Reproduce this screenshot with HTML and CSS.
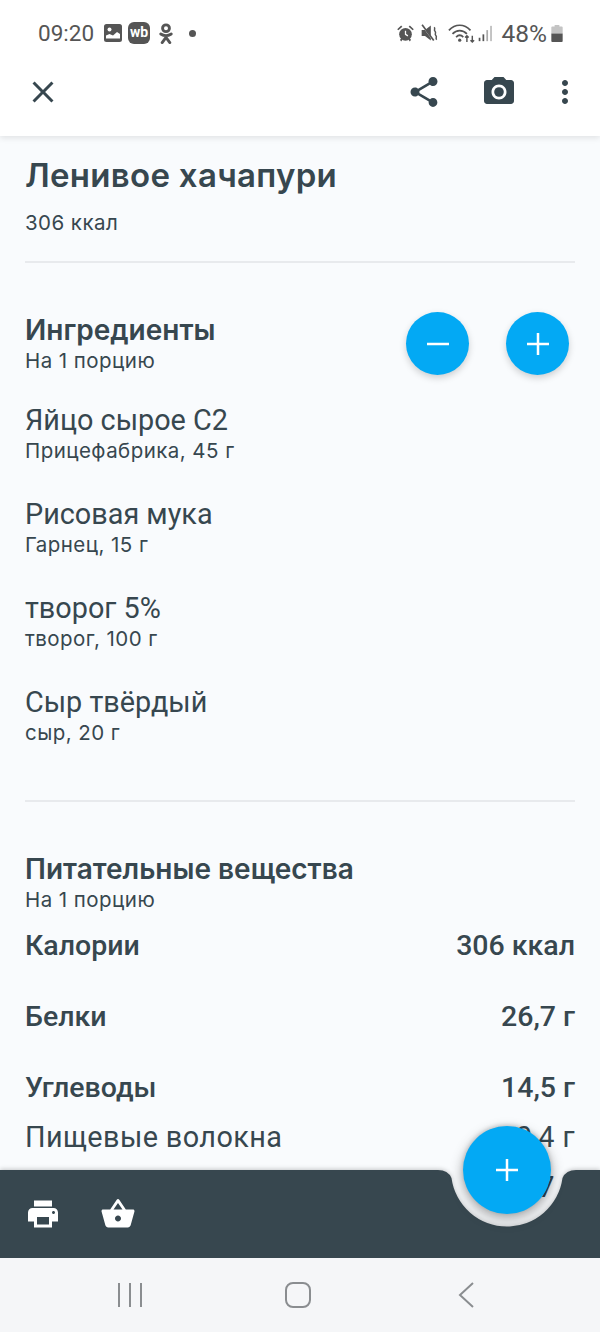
FILE: index.html
```html
<!DOCTYPE html>
<html lang="ru">
<head>
    <meta charset="UTF-8">
    <meta name="viewport" content="width=device-width, initial-scale=1.0">
    <title>Ленивое хачапури</title>
    <link rel="stylesheet" href="styles.css">
</head>
<body>
    <header class="top">
        <div class="status">
            <span class="time">09:20</span>
            <svg class="st-pic" viewBox="0 0 18 18"><path fill="#555" d="M2.5 0h13A2.5 2.5 0 0 1 18 2.5v13a2.500 2.500 0 0 1-2.500 2.500h-13A2.500 2.500 0 0 1 0 15.500v-13A2.500 2.500 0 0 1 2.500 0z"/><circle cx="5.500" cy="5.500" r="2" fill="#fff"/><path fill="#fff" d="M2 14.500v-3l3.500-1.500 3.500 1.500 4-3.500 3 2v4.500z"/></svg>
            <span class="st-wb">wb</span>
            <svg class="st-ok" viewBox="0 0 16 22"><circle cx="8" cy="5.500" r="3.600" fill="none" stroke="#555" stroke-width="3"/><path fill="none" stroke="#555" stroke-width="3" stroke-linecap="round" d="M2.500 11.500c3.500 2.200 7.500 2.200 11 0M8 13.500v2M8 15l-4 5.500M8 15l4 5.500"/></svg>
            <span class="st-dot"></span>
            <span class="st-gap"></span>
            <svg class="st-alarm" viewBox="0 0 24 24"><circle cx="12" cy="13" r="8" fill="#555"/><path fill="#555" d="M1.500 6.500 6.500 2l1.500 1.500-5 4.500zM22.500 6.500 17.500 2 16 3.500l5 4.500zM5 20l2-2 1.500 1.500-2 2.500zM19 20l-2-2-1.500 1.500 2 2.500z"/><path fill="none" stroke="#fff" stroke-width="1.600" d="M12 8.500V13l3 2"/></svg>
            <svg class="st-mute" viewBox="0 0 24 24"><path fill="#555" d="M2 8.500h4L13 3v18l-7-5.500H2z"/><path stroke="#fff" stroke-width="1.500" d="M2 2l14 19"/><path stroke="#555" stroke-width="2" d="M2.500 2l14 19"/><path fill="none" stroke="#555" stroke-width="1.800" d="M17 5c2 2 -1 3 1 5s-1 3 1 5 -1 3 1 5"/></svg>
            <svg class="st-wifi" viewBox="0 0 30 22"><path fill="none" stroke="#555" stroke-width="1.900" d="M1 8c7-7.500 17-7.500 24 0M5 12c4.500-5 11.500-5 16 0M9 15.500c2.500-2.500 5.500-2.500 8 0"/><circle cx="13" cy="19" r="1.800" fill="#555"/><path stroke="#555" stroke-width="1.600" fill="none" d="M21 21v-7M19 16l2-2 2 2M27 14v7M25 19l2 2 2-2"/></svg>
            <svg class="st-signal" viewBox="0 0 16 20"><rect x="0" y="15" width="2" height="4" fill="#555"/><rect x="4.500" y="11" width="2" height="8" fill="#555"/><rect x="9" y="6" width="2" height="13" fill="#aaa"/><rect x="13.500" y="1" width="2" height="18" fill="#bbb"/></svg>
            <span class="st-batt-text">48%</span>
            <svg class="st-batt" viewBox="0 0 12 18"><path fill="#c4c4c4" d="M3.500 0h5v1.500H11a1 1 0 0 1 1 1V9H0V2.500a1 1 0 0 1 1-1h2.500z"/><path fill="#555" d="M0 9h12v8a1 1 0 0 1-1 1H1a1 1 0 0 1-1-1z"/></svg>
        </div>
        <div class="appbar">
            <svg class="icon" viewBox="0 0 24 24"><path d="M19 6.410 17.590 5 12 10.590 6.410 5 5 6.410 10.590 12 5 17.590 6.410 19 12 13.410 17.590 19 19 17.590 13.410 12z"/></svg>
            <span class="grow"></span>
            <svg class="icon" viewBox="0 0 24 24"><path d="M18 16.080c-.76 0-1.440.3-1.960.77L8.910 12.700c.05-.23.09-.46.09-.7s-.04-.47-.09-.7l7.050-4.110c.54.5 1.250.81 2.040.81 1.660 0 3-1.340 3-3s-1.340-3-3-3-3 1.340-3 3c0 .24.04.47.09.7L8.040 9.810C7.500 9.310 6.790 9 6 9c-1.660 0-3 1.340-3 3s1.340 3 3 3c.79 0 1.500-.31 2.040-.81l7.120 4.160c-.05.21-.08.43-.08.65 0 1.610 1.310 2.920 2.920 2.920s2.920-1.310 2.920-2.920-1.310-2.920-2.920-2.920z"/></svg>
            <svg class="icon icon-cam" viewBox="0 0 24 24"><circle cx="12" cy="12" r="3.200"/><path d="M9 2 7.170 4H4c-1.100 0-2 .9-2 2v12c0 1.100.9 2 2 2h16c1.100 0 2-.9 2-2V6c0-1.100-.9-2-2-2h-3.170L15 2H9zm3 15c-2.760 0-5-2.240-5-5s2.240-5 5-5 5 2.240 5 5-2.240 5-5 5z"/></svg>
            <svg class="icon icon-more" viewBox="0 0 24 24"><path d="M12 8c1.100 0 2-.9 2-2s-.9-2-2-2-2 .9-2 2 .9 2 2 2zm0 2c-1.100 0-2 .9-2 2s.9 2 2 2 2-.9 2-2-.9-2-2-2zm0 6c-1.100 0-2 .9-2 2s.9 2 2 2 2-.9 2-2-.9-2-2-2z"/></svg>
        </div>
    </header>

    <main class="content">
        <section class="intro">
            <h1 class="title">Ленивое хачапури</h1>
            <p class="kcal">306 ккал</p>
        </section>

        <section class="ingredients">
            <div class="head-row">
                <div>
                    <h2 class="sec-title">Ингредиенты</h2>
                    <p class="sec-sub">На 1 порцию</p>
                </div>
                <div class="stepper">
                    <button class="round"><svg viewBox="0 0 24 24"><path d="M1 12h22"/></svg></button>
                    <button class="round"><svg viewBox="0 0 24 24"><path d="M1 12h22M12 1v22"/></svg></button>
                </div>
            </div>
            <div class="ing"><div class="ing-name">Яйцо сырое С2</div><div class="ing-sub">Прицефабрика, 45 г</div></div>
            <div class="ing"><div class="ing-name">Рисовая мука</div><div class="ing-sub">Гарнец, 15 г</div></div>
            <div class="ing"><div class="ing-name">творог 5%</div><div class="ing-sub">творог, 100 г</div></div>
            <div class="ing"><div class="ing-name">Сыр твёрдый</div><div class="ing-sub">сыр, 20 г</div></div>
        </section>

        <section class="nutrients">
            <h2 class="sec-title">Питательные вещества</h2>
            <p class="sec-sub">На 1 порцию</p>
            <div class="nut main-nut"><span>Калории</span><span>306 ккал</span></div>
            <div class="nut main-nut"><span>Белки</span><span>26,7 г</span></div>
            <div class="nut main-nut carbs"><span>Углеводы</span><span>14,5 г</span></div>
            <div class="nut"><span>Пищевые волокна</span><span>0,4 г</span></div>
            <div class="nut"><span>Сахар</span><span>0,7 г</span></div>
        </section>
    </main>

    <div class="bottombar">
        <svg class="bar-shape" viewBox="0 0 600 88"><path d="M0 0H438Q448 0 451.500 8A56 56 0 0 0 562.500 8Q566 0 576 0H600V88H0Z"/></svg>
        <svg class="bar-icon" viewBox="0 0 24 24"><path d="M19 8H5c-1.660 0-3 1.340-3 3v6h4v4h12v-4h4v-6c0-1.660-1.340-3-3-3zm-3 11H8v-5h8v5zm3-7c-.55 0-1-.45-1-1s.45-1 1-1 1 .45 1 1-.45 1-1 1zm-1-9H6v4h12V3z"/></svg>
        <svg class="bar-icon" viewBox="0 0 24 24"><path d="M17.210 9l-4.380-6.560c-.19-.28-.51-.42-.83-.42-.32 0-.64.14-.83.43L6.790 9H2c-.55 0-1 .45-1 1 0 .09.01.18.04.27l2.540 9.270c.23.84 1 1.460 1.920 1.460h13c.92 0 1.690-.62 1.930-1.460l2.540-9.270L23 10c0-.55-.45-1-1-1h-4.790zM9 9l3-4.400L15 9H9zm3 8c-1.100 0-2-.9-2-2s.9-2 2-2 2 .9 2 2-.9 2-2 2z"/></svg>
        <button class="fab"><svg viewBox="0 0 24 24"><path d="M1 12h22M12 1v22"/></svg></button>
    </div>

    <nav class="sysnav">
        <svg viewBox="0 0 26 26"><path d="M2 1v24M13 1v24M24 1v24"/></svg>
        <svg viewBox="0 0 26 26"><rect x="1" y="1" width="24" height="24" rx="7"/></svg>
        <svg viewBox="0 0 26 26"><path d="M20 1 7 13l13 12"/></svg>
    </nav>
</body>
</html>
```

FILE: styles.css
```css
* {
    box-sizing: border-box;
}
html, body {
    margin: 0;
    padding: 0;
}
body {
    width: 600px;
    height: 1332px;
    display: flex;
    flex-direction: column;
    overflow: hidden;
    position: relative;
    font-family: Roboto, "Noto Sans", sans-serif;
    color: #37474f;
    background-color: #f9fbfd;
}
h1, h2, p {
    margin: 0;
    font-weight: normal;
}

/* header */
.top {
    height: 136px;
    flex: none;
    background-color: #fff;
    box-shadow: 0 2px 6px rgba(0, 0, 0, 0.1);
    position: relative;
    z-index: 2;
}
.status {
    height: 66px;
    padding: 0 37px 0 38px;
    display: flex;
    align-items: center;
    color: #555;
}
.time {
    font-size: 22.500px;
    margin-right: 10px;
}
.st-pic { width: 18px; height: 18px; margin-right: 6px; }
.st-wb {
    width: 22px;
    height: 22px;
    border-radius: 6px;
    background-color: #555;
    color: #fff;
    font-size: 14px;
    font-weight: 700;
    line-height: 21px;
    text-align: center;
    margin-right: 8px;
}
.st-ok { width: 16px; height: 21px; }
.st-dot {
    width: 7px;
    height: 7px;
    border-radius: 50%;
    background-color: #555;
    margin-left: 15px;
}
.st-gap { flex: 1; }
.st-alarm { width: 19px; height: 19px; margin-right: 5px; }
.st-mute { width: 20px; height: 20px; margin-right: 8px; }
.st-wifi { width: 27px; height: 20px; margin-right: 3px; }
.st-signal { width: 15px; height: 17px; margin-right: 9px; }
.st-batt-text { font-size: 24.500px; margin-right: 4px; }
.st-batt { width: 12px; height: 17px; }

.appbar {
    height: 52px;
    padding: 0 17px 0 25px;
    display: flex;
    align-items: center;
}
.grow { flex: 1; }
.icon {
    width: 36px;
    height: 36px;
    fill: #37474f;
    flex: none;
}
.icon-cam { margin-left: 39px; }
.icon-more { margin-left: 30px; }

/* content */
.content {
    flex: 1;
    overflow: hidden;
    padding: 0 25px;
}
.intro {
    height: 127px;
    border-bottom: 2px solid #e8eaed;
    padding-top: 19px;
}
.title {
    font-family: Inter, Roboto, sans-serif;
    font-size: 33px;
    line-height: 40px;
    font-weight: 600;
    letter-spacing: 0.3px;
}
.kcal {
    font-family: Inter, Roboto, sans-serif;
    font-size: 20.500px;
    letter-spacing: 0.450px;
    line-height: 24px;
    margin-top: 16px;
}
.ingredients {
    height: 539px;
    border-bottom: 2px solid #e8eaed;
    padding-top: 49px;
}
.head-row {
    display: flex;
    justify-content: space-between;
    height: 64px;
}
.sec-title {
    font-family: Inter, Roboto, sans-serif;
    font-size: 28px;
    line-height: 36px;
    font-weight: 600;
}
.sec-sub {
    font-family: Inter, Roboto, sans-serif;
    font-size: 20.500px;
    letter-spacing: 0.450px;
    line-height: 26px;
}
.stepper {
    display: flex;
    gap: 37px;
    margin-right: 6px;
}
.round, .fab {
    border: none;
    padding: 0;
    border-radius: 50%;
    background-color: #03a9f4;
    display: flex;
    align-items: center;
    justify-content: center;
}
.round {
    width: 63px;
    height: 63px;
    box-shadow: 0 3px 7px rgba(0, 0, 0, 0.18);
}
.round svg, .fab svg {
    width: 24px;
    height: 24px;
    stroke: #fff;
    stroke-width: 2.500;
    fill: none;
}
.ing {
    height: 94px;
    padding-top: 27px;
}
.ing-name {
    font-size: 28.800px;
    line-height: 34px;
}
.ing-sub {
    font-family: Inter, Roboto, sans-serif;
    font-size: 20.500px;
    letter-spacing: 0.450px;
    line-height: 28px;
}
.nutrients {
    padding-top: 49px;
}
.nut {
    display: flex;
    justify-content: space-between;
    font-size: 28.800px;
    height: 50px;
    line-height: 50px;
    letter-spacing: 0.4px;
}
.main-nut {
    font-size: 28.500px;
    font-weight: 500;
    height: 71px;
    line-height: 71px;
    letter-spacing: 0;
}
.main-nut:first-of-type {
    margin-top: -3px;
}
.carbs {
    height: 60px;
}

/* bottom bar */
.bottombar {
    position: absolute;
    left: 0;
    top: 1170px;
    width: 600px;
    height: 88px;
    padding-left: 25px;
    display: flex;
    align-items: center;
    gap: 39px;
    filter: drop-shadow(0 -1px 2px rgba(0, 0, 0, 0.2));
}
.bar-shape {
    position: absolute;
    left: 0;
    top: 0;
    width: 600px;
    height: 88px;
    fill: #37474f;
}
.bar-icon {
    width: 36px;
    height: 36px;
    fill: #fff;
    position: relative;
}
.fab {
    position: absolute;
    left: 463px;
    top: -44px;
    width: 88px;
    height: 88px;
    box-shadow: 0 5px 14px rgba(0, 0, 0, 0.3);
}
.fab svg {
    width: 24px;
    height: 24px;
}

/* system navigation */
.sysnav {
    height: 74px;
    flex: none;
    background-color: #f5f6f8;
    display: flex;
    justify-content: space-between;
    align-items: center;
    padding: 0 121px 0 117px;
    position: relative;
    z-index: 1;
}
.sysnav svg {
    width: 26px;
    height: 26px;
    fill: none;
    stroke: #8a8d90;
    stroke-width: 2;
}
```
